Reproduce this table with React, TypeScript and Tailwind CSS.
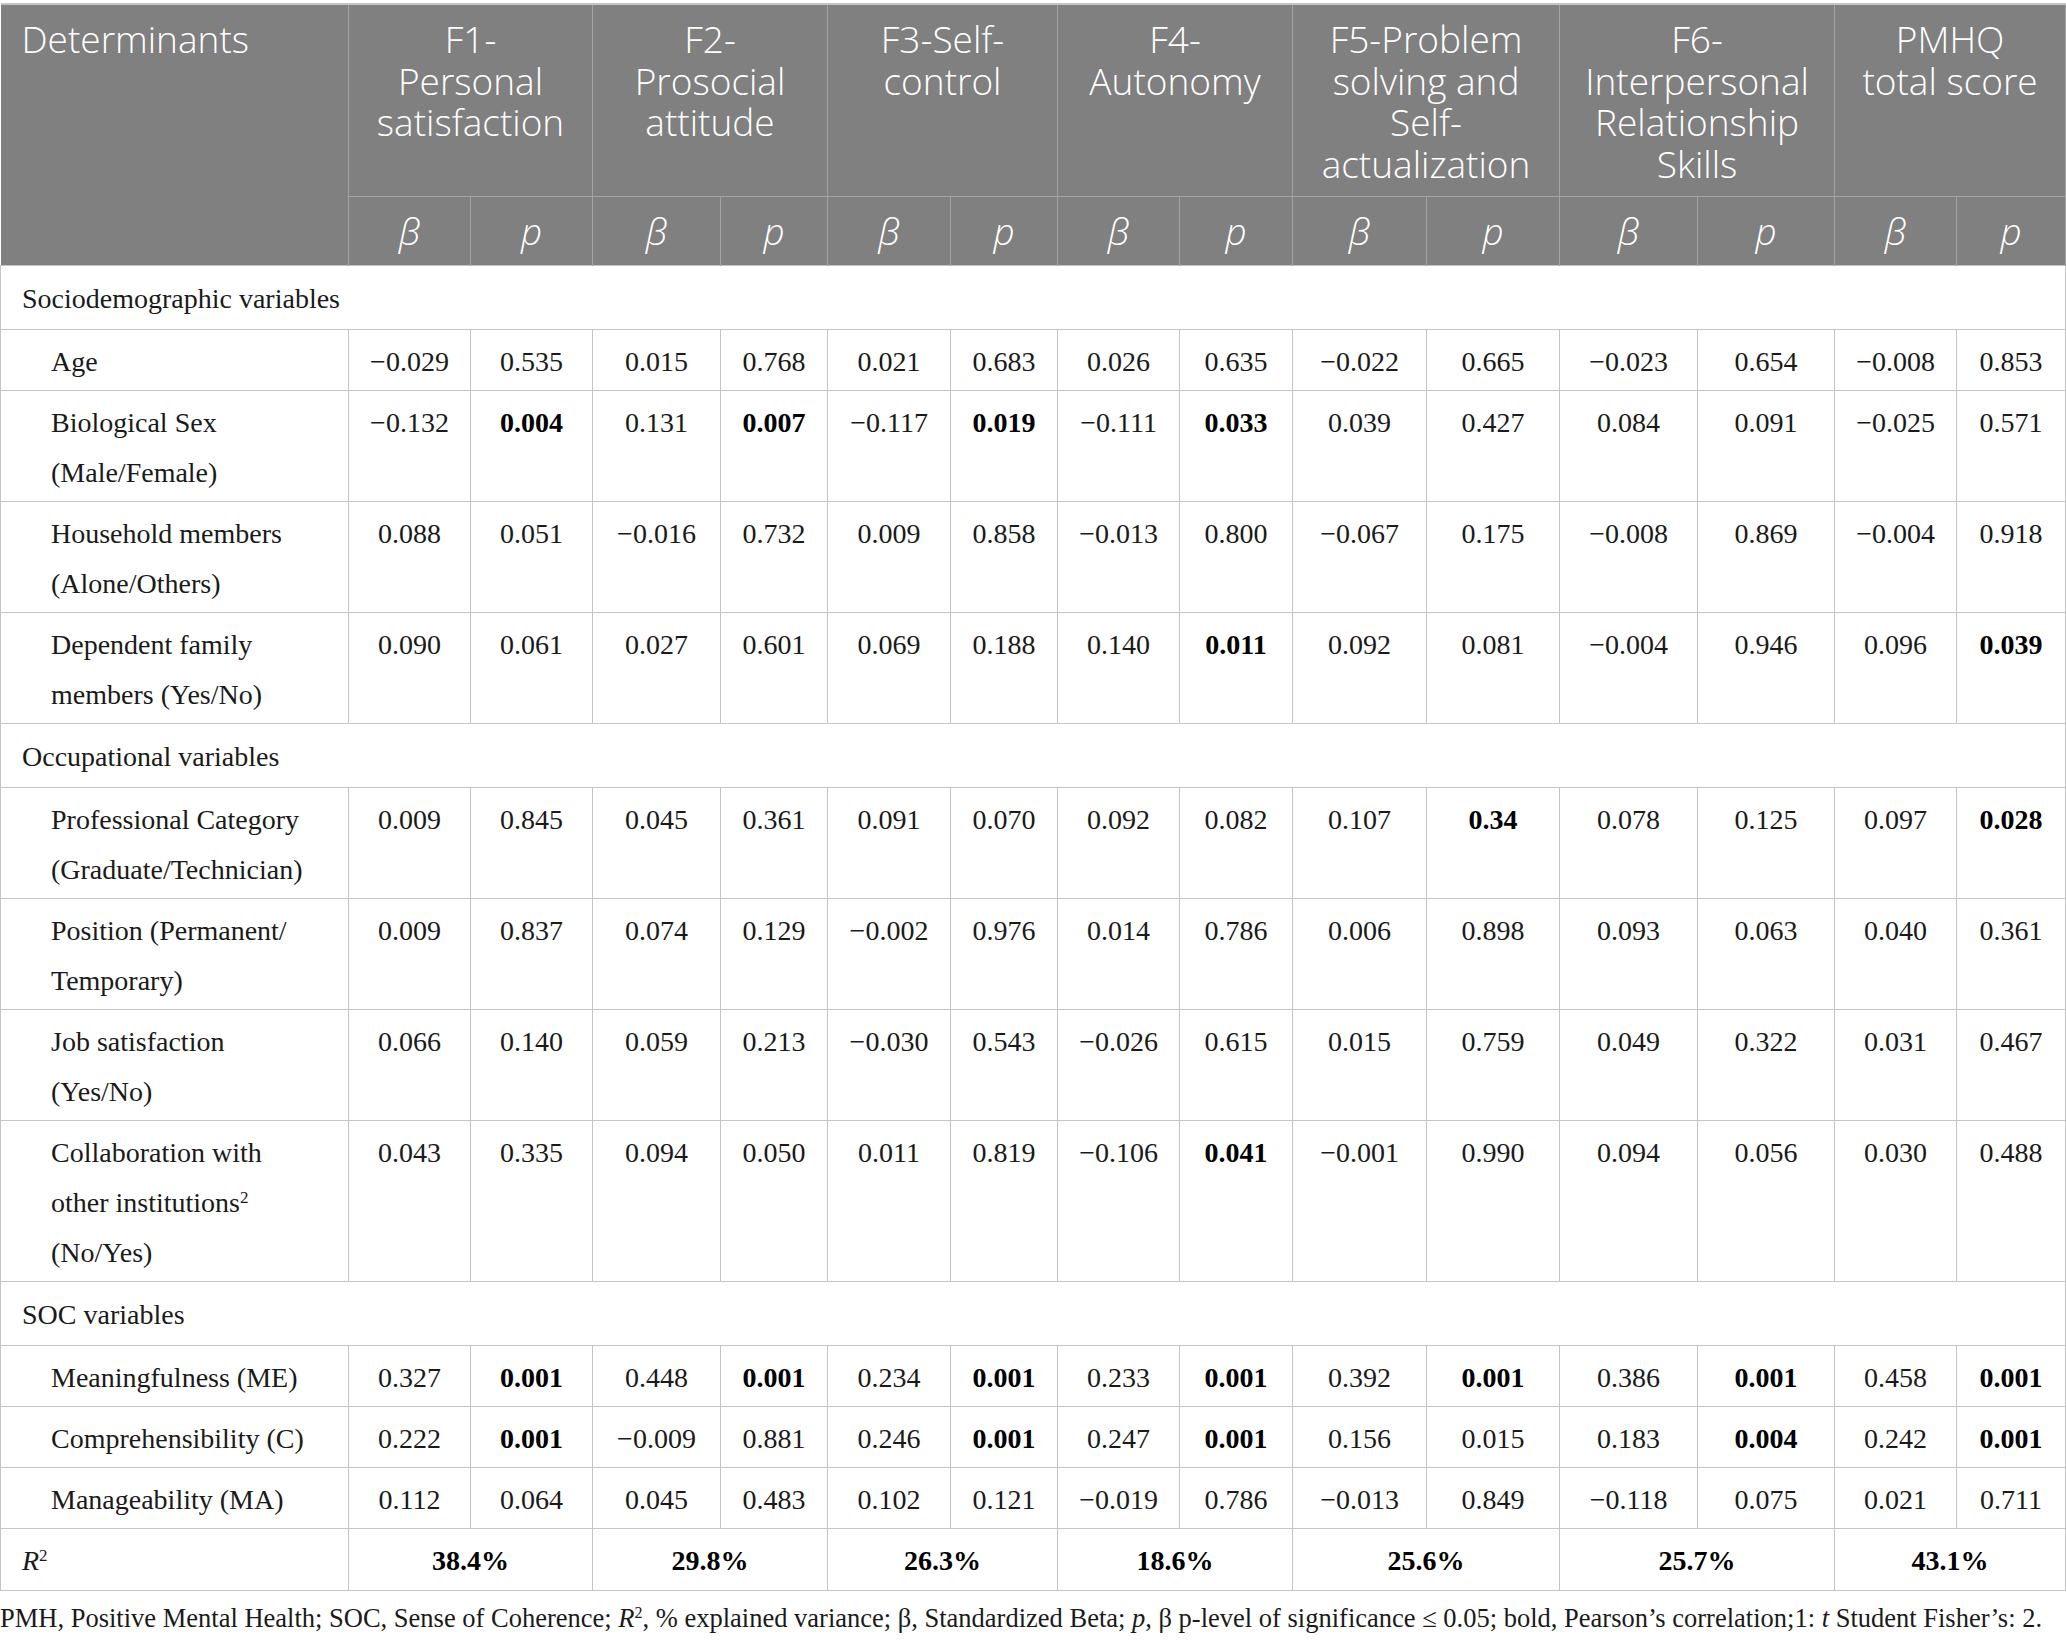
import React from 'react';

type Cell = { v: string; b?: boolean };

interface DataRow {
  kind: 'data';
  label: string[];
  values: Cell[];
}

interface SectionRow {
  kind: 'section';
  label: string;
}

type Row = DataRow | SectionRow;

const colWidths = [348, 122, 122, 128, 107, 123, 107, 122, 113, 134, 133, 138, 137, 122, 109];

const factors: string[][] = [
  ['F1-', 'Personal', 'satisfaction'],
  ['F2-', 'Prosocial', 'attitude'],
  ['F3-Self-', 'control'],
  ['F4-', 'Autonomy'],
  ['F5-Problem', 'solving and', 'Self-', 'actualization'],
  ['F6-', 'Interpersonal', 'Relationship', 'Skills'],
  ['PMHQ', 'total score'],
];

// values written as "v" or "*v" for bold
const parse = (s: string): Cell[] =>
  s.split(' ').map((t) => (t.startsWith('*') ? { v: t.slice(1), b: true } : { v: t }));

const rows: Row[] = [
  { kind: 'section', label: 'Sociodemographic variables' },
  { kind: 'data', label: ['Age'], values: parse('−0.029 0.535 0.015 0.768 0.021 0.683 0.026 0.635 −0.022 0.665 −0.023 0.654 −0.008 0.853') },
  { kind: 'data', label: ['Biological Sex', '(Male/Female)'], values: parse('−0.132 *0.004 0.131 *0.007 −0.117 *0.019 −0.111 *0.033 0.039 0.427 0.084 0.091 −0.025 0.571') },
  { kind: 'data', label: ['Household members', '(Alone/Others)'], values: parse('0.088 0.051 −0.016 0.732 0.009 0.858 −0.013 0.800 −0.067 0.175 −0.008 0.869 −0.004 0.918') },
  { kind: 'data', label: ['Dependent family', 'members (Yes/No)'], values: parse('0.090 0.061 0.027 0.601 0.069 0.188 0.140 *0.011 0.092 0.081 −0.004 0.946 0.096 *0.039') },
  { kind: 'section', label: 'Occupational variables' },
  { kind: 'data', label: ['Professional Category', '(Graduate/Technician)'], values: parse('0.009 0.845 0.045 0.361 0.091 0.070 0.092 0.082 0.107 *0.34 0.078 0.125 0.097 *0.028') },
  { kind: 'data', label: ['Position (Permanent/', 'Temporary)'], values: parse('0.009 0.837 0.074 0.129 −0.002 0.976 0.014 0.786 0.006 0.898 0.093 0.063 0.040 0.361') },
  { kind: 'data', label: ['Job satisfaction', '(Yes/No)'], values: parse('0.066 0.140 0.059 0.213 −0.030 0.543 −0.026 0.615 0.015 0.759 0.049 0.322 0.031 0.467') },
  { kind: 'data', label: ['Collaboration with', 'other institutions²', '(No/Yes)'], values: parse('0.043 0.335 0.094 0.050 0.011 0.819 −0.106 *0.041 −0.001 0.990 0.094 0.056 0.030 0.488') },
  { kind: 'section', label: 'SOC variables' },
  { kind: 'data', label: ['Meaningfulness (ME)'], values: parse('0.327 *0.001 0.448 *0.001 0.234 *0.001 0.233 *0.001 0.392 *0.001 0.386 *0.001 0.458 *0.001') },
  { kind: 'data', label: ['Comprehensibility (C)'], values: parse('0.222 *0.001 −0.009 0.881 0.246 *0.001 0.247 *0.001 0.156 0.015 0.183 *0.004 0.242 *0.001') },
  { kind: 'data', label: ['Manageability (MA)'], values: parse('0.112 0.064 0.045 0.483 0.102 0.121 −0.019 0.786 −0.013 0.849 −0.118 0.075 0.021 0.711') },
];

const rSquared = ['38.4%', '29.8%', '26.3%', '18.6%', '25.6%', '25.7%', '43.1%'];

const renderLabel = (line: string) => {
  if (line.endsWith('²')) {
    return (
      <>
        {line.slice(0, -1)}
        <sup className="text-[17px] top-[-9px]">2</sup>
      </>
    );
  }
  return line;
};

const App: React.FC = () => {
  return (
    <div className="w-[2066px] bg-white pt-[3px] text-[#1a1a1a]">
      <table className="w-[2066px] table-fixed border-collapse">
        <colgroup>
          {colWidths.map((w, i) => (
            <col key={i} style={{ width: w }} />
          ))}
        </colgroup>
        <thead className="font-['Open_Sans',sans-serif] text-[37px] leading-[41.5px] text-white">
          <tr className="border-t-2 border-[#c4c4c4]">
            <th
              rowSpan={2}
              className="bg-[#7f807f] border-r border-[#a3a3a3] pl-[21px] pt-[13px] text-left align-top font-[350]"
            >
              Determinants
            </th>
            {factors.map((lines, i) => (
              <th
                key={i}
                colSpan={2}
                className="bg-[#7f807f] border-x border-b border-[#a3a3a3] pt-[13px] pb-[12px] text-center align-top font-[350]"
              >
                {lines.map((l, j) => (
                  <div key={j}>{l}</div>
                ))}
              </th>
            ))}
          </tr>
          <tr>
            {factors.map((_, i) => (
              <React.Fragment key={i}>
                <th className="bg-[#7f807f] border-x border-[#a3a3a3] py-[13px] text-center font-[350] italic">β</th>
                <th className="bg-[#7f807f] border-x border-[#a3a3a3] py-[13px] text-center font-[350] italic">p</th>
              </React.Fragment>
            ))}
          </tr>
        </thead>
        <tbody className="font-['Liberation_Serif',serif] text-[28px] leading-[50px]">
          {rows.map((row, i) =>
            row.kind === 'section' ? (
              <tr key={i} className="border border-[#c4c4c4]">
                <td colSpan={15} className="pl-[21px] pt-[8px] pb-[5px] align-top">
                  {row.label}
                </td>
              </tr>
            ) : (
              <tr key={i} className="border border-[#c4c4c4]">
                <td className="border border-[#c4c4c4] pl-[50px] pt-[7px] pb-[3px] align-top whitespace-nowrap">
                  {row.label.map((l, j) => (
                    <div key={j}>{renderLabel(l)}</div>
                  ))}
                </td>
                {row.values.map((c, j) => (
                  <td
                    key={j}
                    className={`border border-[#c4c4c4] pt-[7px] pb-[3px] text-center align-top ${c.b ? 'font-bold text-black' : ''}`}
                  >
                    {c.v}
                  </td>
                ))}
              </tr>
            )
          )}
          <tr className="border border-[#c4c4c4]">
            <td className="border border-[#c4c4c4] pl-[21px] pt-[7px] pb-[4px] align-top italic">
              R<sup className="text-[17px] top-[-9px] not-italic">2</sup>
            </td>
            {rSquared.map((r, i) => (
              <td
                key={i}
                colSpan={2}
                className="border border-[#c4c4c4] pt-[7px] pb-[4px] text-center align-top font-bold text-black"
              >
                {r}
              </td>
            ))}
          </tr>
        </tbody>
      </table>
      <p className="mt-[12px] whitespace-nowrap font-['Liberation_Serif',serif] text-[26.5px] leading-[30px]">
        PMH, Positive Mental Health; SOC, Sense of Coherence; <i>R</i>
        <sup className="text-[16px] top-[-9px]">2</sup>, % explained variance; β, Standardized Beta;{' '}
        <i>p</i>, β p-level of significance ≤ 0.05; bold, Pearson’s correlation;1: <i>t</i> Student Fisher’s: 2.
      </p>
    </div>
  );
};

export default App;
